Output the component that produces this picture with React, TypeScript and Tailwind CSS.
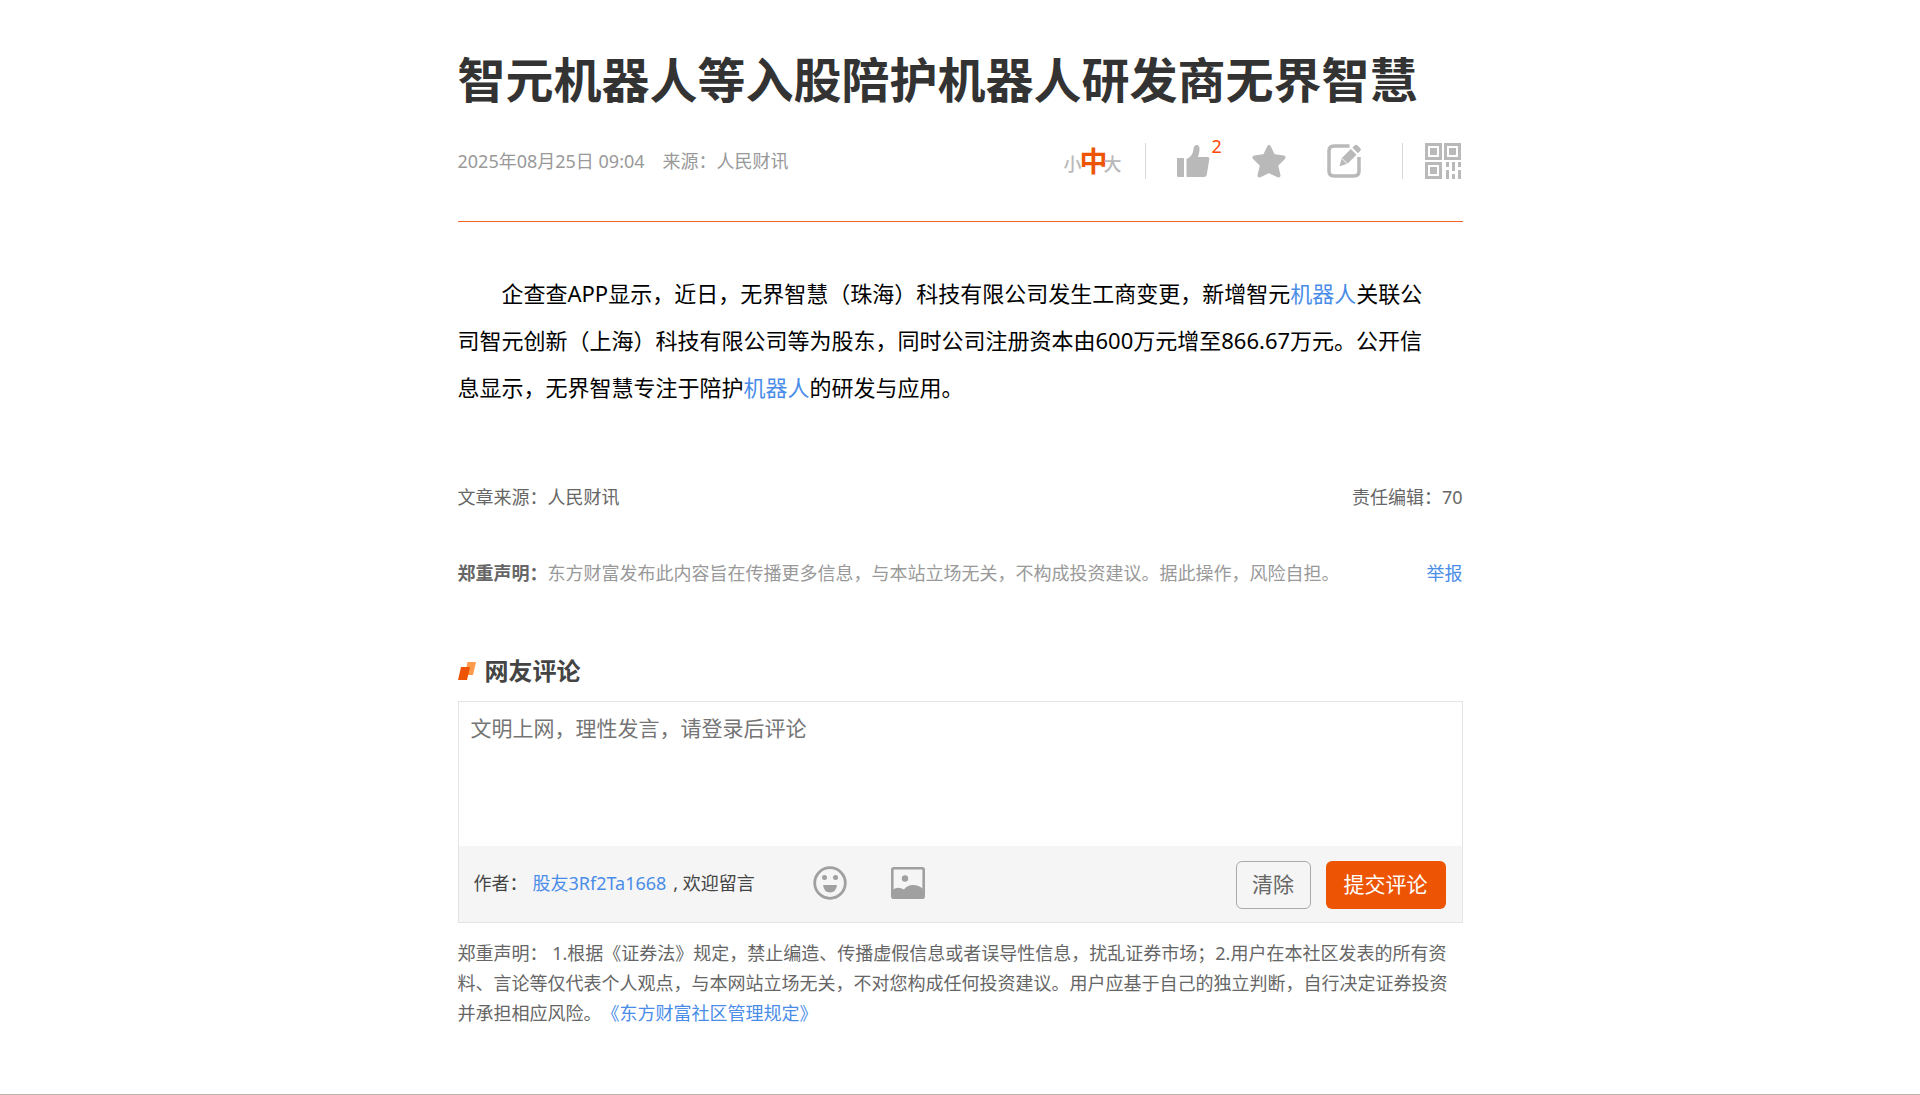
import React from "react";

const FONT = "font-['Noto_Sans','Noto_Sans_CJK_SC',sans-serif]";

function ThumbIcon() {
  return (
    <svg viewBox="0 0 34 34" className="h-[34px] w-[34px]" fill="#b9b9b9" aria-hidden="true">
      <path d="M1 14h7v19H2.200Q1 33 1 31.500z" />
      <path d="M10.500 15c4-1.500 6.500-5 7-10 .3-3 1.500-4 3-4 2.500 0 3.300 2 3 5-.2 2.500-.8 5-1.500 7h9.500c1.500 0 2 1 1.800 2.200l-2.500 15.300c-.3 1.700-1.200 2.500-2.800 2.500H10.500z" />
    </svg>
  );
}

function StarIcon() {
  return (
    <svg viewBox="0 0 34 34" className="h-[34px] w-[34px]" fill="#b9b9b9" stroke="#b9b9b9" strokeWidth="4" strokeLinejoin="round" aria-hidden="true">
      <path d="M17 3l4.200 9 10.300 1.500-7.500 7.500 2.500 10.500L17 27l-9.500 4.500L10 21 2.500 13.500 12.800 12z" />
    </svg>
  );
}

function EditIcon() {
  return (
    <svg viewBox="0 0 34 34" className="h-[34px] w-[34px]" aria-hidden="true">
      <path d="M22.500 2H7Q2 2 2 7v20q0 5 5 5h20q5 0 5-5V13" fill="none" stroke="#b9b9b9" strokeWidth="3.500" />
      <path d="M12.500 22.200l2.300-8.200 9-9 5.700 5.700-9 9z" fill="#b9b9b9" />
      <path d="M25.300 3.600l2.200-2.200q1.500-1.400 3 0l2.600 2.600q1.400 1.500 0 3l-2.200 2.200z" fill="#b9b9b9" />
      <path d="M15 14.500l5.500 5.500" stroke="#fff" strokeWidth="1" />
    </svg>
  );
}

function QrIcon() {
  return (
    <svg viewBox="0 0 36 36" className="h-9 w-9" fill="#b9b9b9" aria-hidden="true">
      {[[0, 0], [19, 0], [0, 19]].map(([x, y]) => (
        <g key={`${x}-${y}`}>
          <rect x={x + 1.5} y={y + 1.5} width="14" height="14" fill="none" stroke="#b9b9b9" strokeWidth="3" />
          <rect x={x + 5} y={y + 5} width="7" height="7" />
        </g>
      ))}
      <path d="M21 19h3v5h-3zM21 27h3v9h-3zM27 19h3v9h-3zM27 31h3v5h-3zM33 19h3v5h-3zM33 27h3v9h-3z" />
    </svg>
  );
}

function SmileIcon() {
  return (
    <svg viewBox="0 0 34 34" className="h-[34px] w-[34px]" fill="#a0a0a0" aria-hidden="true">
      <circle cx="17" cy="17" r="15.300" fill="none" stroke="#a0a0a0" strokeWidth="2.800" />
      <circle cx="11.500" cy="11.500" r="2.500" />
      <circle cx="22.500" cy="11.500" r="2.500" />
      <path d="M10 19h14q-1 7.500-7 7.500T10 19z" />
    </svg>
  );
}

function PictureIcon() {
  return (
    <svg viewBox="0 0 34 32" className="h-8 w-[34px]" fill="#a0a0a0" aria-hidden="true">
      <rect x="1.300" y="1.300" width="31.400" height="29.400" rx="1.500" fill="none" stroke="#a0a0a0" strokeWidth="2.600" />
      <circle cx="14" cy="11.500" r="3.200" />
      <path d="M2 22.500q5-3.500 11 0 3-4.500 9-4.500t10 4V31H2z" />
    </svg>
  );
}

function HeadingMark() {
  return (
    <svg viewBox="0 0 18 18" className="h-[18px] w-[18px]" aria-hidden="true">
      <path d="M9.500 0H18l-3 13H7z" fill="#ff9a4a" />
      <path d="M3 5h9l-3 13H0z" fill="#ed5505" />
    </svg>
  );
}

export default function App() {
  return (
    <div className={`min-h-screen border-b border-[#beb4ae] bg-white text-[#666] [text-spacing-trim:space-all] ${FONT}`}>
      <main className="mx-auto flex max-w-[1005px] flex-col">
        <h1 className="mt-11 text-5xl leading-[72px] font-bold text-[#333]">智元机器人等入股陪护机器人研发商无界智慧</h1>

        <div className="flex h-[106px] items-center justify-between border-b border-[#f4641f] pb-4">
          <div className="flex gap-[18px] text-lg text-[#999]">
            <time>2025年08月25日 09:04</time>
            <span>来源：人民财讯</span>
          </div>
          <div className="flex items-center">
            <div className="flex items-center leading-7 text-[#b9b9b9]">
              <button className="-mr-0.5 pt-1.5 text-lg leading-6 font-medium">小</button>
              <button className="text-[28px] font-bold text-[#ed5505]">中</button>
              <button className="-ml-1 pt-1.5 text-lg leading-6 font-medium">大</button>
            </div>
            <span className="ml-[23px] h-9 w-px bg-[#d8d8d8]" />
            <button className="relative ml-[30px]" aria-label="点赞">
              <ThumbIcon />
              <span className="absolute -top-2.5 left-9 text-lg leading-6 text-[#ff4901]">2</span>
            </button>
            <button className="ml-[42px]" aria-label="收藏"><StarIcon /></button>
            <button className="ml-[41px]" aria-label="评论"><EditIcon /></button>
            <span className="ml-[41px] h-9 w-px bg-[#d8d8d8]" />
            <button className="mr-0.5 ml-[22px]" aria-label="二维码"><QrIcon /></button>
          </div>
        </div>

        <p className="mt-12 pr-7 indent-11 text-[22px] leading-[47px] text-black">
          企查查APP显示，近日，无界智慧（珠海）科技有限公司发生工商变更，新增智元<a href="#robot" className="text-[#4a8de8]">机器人</a>关联公司智元创新（上海）科技有限公司等为股东，同时公司注册资本由600万元增至866.67万元。公开信息显示，无界智慧专注于陪护<a href="#robot" className="text-[#4a8de8]">机器人</a>的研发与应用。
        </p>

        <div className="mt-[72px] flex justify-between text-lg">
          <span>文章来源：人民财讯</span>
          <span>责任编辑：70</span>
        </div>

        <div className="mt-12 flex justify-between text-lg">
          <p className="text-[#999]"><b className="text-[#666]">郑重声明：</b>东方财富发布此内容旨在传播更多信息，与本站立场无关，不构成投资建议。据此操作，风险自担。</p>
          <a href="#report" className="text-[#4a8de8]">举报</a>
        </div>

        <h2 className="mt-[68px] flex items-center gap-[9px] text-2xl font-bold text-[#444]">
          <HeadingMark />网友评论
        </h2>

        <form className="mt-3.5 border border-[#e4e4e4]" onSubmit={(e) => e.preventDefault()}>
          <textarea
            aria-label="评论内容"
            placeholder="文明上网，理性发言，请登录后评论"
            className="block h-36 w-full resize-none px-3 py-2.5 text-[21px] leading-8 outline-none placeholder:text-[#757575]"
          />
          <div className="flex items-center justify-between bg-[#f5f5f5] pt-[15px] pr-4 pb-[13px] pl-[15px]">
            <div className="flex items-center pb-1 text-lg text-[#444]">
              <span>作者：</span>
              <a href="#user" className="ml-[5px] text-[#4a8de8]">股友3Rf2Ta1668</a>
              <span className="ml-[7px]">, 欢迎留言</span>
              <button type="button" className="ml-[58px]" aria-label="表情"><SmileIcon /></button>
              <button type="button" className="ml-11" aria-label="图片"><PictureIcon /></button>
            </div>
            <div className="flex gap-[15px] text-[21px]">
              <button type="reset" className="h-12 w-[75px] rounded-md border border-[#aaa]">清除</button>
              <button type="submit" className="h-12 w-[120px] rounded-md bg-[#ed5505] text-white">提交评论</button>
            </div>
          </div>
        </form>

        <p className="mt-[15px] text-lg leading-[30px]">
          郑重声明： 1.根据《证券法》规定，禁止编造、传播虚假信息或者误导性信息，扰乱证券市场；2.用户在本社区发表的所有资料、言论等仅代表个人观点，与本网站立场无关，不对您构成任何投资建议。用户应基于自己的独立判断，自行决定证券投资并承担相应风险。<a href="#rules" className="text-[#4a8de8]">《东方财富社区管理规定》</a>
        </p>
      </main>
    </div>
  );
}
